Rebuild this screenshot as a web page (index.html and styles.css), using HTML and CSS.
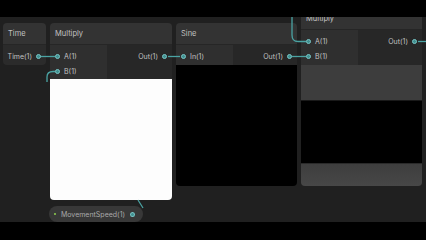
FILE: index.html
```html
<!DOCTYPE html>
<html lang="en">
<head>
    <meta charset="UTF-8">
    <title>Shader Graph</title>
    <link rel="stylesheet" href="styles.css">
</head>
<body>

<div class="canvas">

    <div class="node time">
        <div class="title">Time</div>
        <div class="body">
            <div class="outputs">
                <div class="row out"><span>Time(1)</span><i class="port"></i></div>
            </div>
        </div>
    </div>

    <div class="node multiply">
        <div class="title">Multiply</div>
        <div class="body">
            <div class="inputs">
                <div class="row"><i class="port"></i><span>A(1)</span></div>
                <div class="row"><i class="port"></i><span>B(1)</span></div>
            </div>
            <div class="outputs">
                <div class="row out"><span>Out(1)</span><i class="port"></i></div>
            </div>
        </div>
        <div class="preview white"></div>
    </div>

    <div class="node sine">
        <div class="title">Sine</div>
        <div class="body">
            <div class="inputs">
                <div class="row"><i class="port"></i><span>In(1)</span></div>
            </div>
            <div class="outputs">
                <div class="row out"><span>Out(1)</span><i class="port"></i></div>
            </div>
        </div>
        <div class="preview black"></div>
    </div>

    <div class="node multiply2">
        <div class="title">Multiply</div>
        <div class="body">
            <div class="inputs">
                <div class="row"><i class="port"></i><span>A(1)</span></div>
                <div class="row"><i class="port"></i><span>B(1)</span></div>
            </div>
            <div class="outputs">
                <div class="row out"><span>Out(1)</span><i class="port"></i></div>
            </div>
        </div>
        <div class="extra"></div>
        <div class="preview black short"></div>
        <div class="footer"></div>
    </div>

    <div class="property">
        <i class="dot"></i>
        <span>MovementSpeed(1)</span>
        <i class="port"></i>
    </div>

    <!-- conexiones -->
    <svg class="wires" width="426" height="240">
        <path d="M41 56.5 H55" />
        <path d="M168 56.5 H180" />
        <path d="M292 56.5 H306" />
        <path d="M418 41.5 H426" />
        <path d="M292 0 V35 Q292 41.5 298 41.5 H306" />
        <path d="M55 71.5 H53 Q47 71.5 47 77 V82" />
        <path d="M138 200 L143 208" />
    </svg>

    <div class="bar top"></div>
    <div class="bar bottom"></div>
</div>

</body>
</html>
```

FILE: styles.css
```css
body {
    margin: 0;
    background: #000;
    font-family: Inter, "Noto Sans", sans-serif;
    font-size: 7px;
    color: #c2c2c2;
}
.canvas {
    position: relative;
    width: 426px;
    height: 240px;
    overflow: hidden;
    background: #202020;
}
.bar {
    position: absolute;
    left: 0;
    width: 426px;
    background: #000;
}
.bar.top {
    top: 0;
    height: 17px;
}
.bar.bottom {
    top: 222px;
    height: 18px;
}
.node {
    position: absolute;
    display: flex;
    flex-direction: column;
    border-radius: 4px;
    overflow: hidden;
}
.node.time { left: 3px; top: 23px; width: 43px; }
.node.multiply { left: 50px; top: 23px; width: 122px; }
.node.sine { left: 176px; top: 23px; width: 121px; }
.node.multiply2 { left: 301px; top: 8px; width: 121px; }

.title {
    height: 22px;
    line-height: 22px;
    padding-left: 5px;
    background: #333333;
    font-size: 7.5px;
    border-bottom: 1px solid #262626;
    box-sizing: border-box;
}
.body {
    display: flex;
}
.inputs {
    width: 57px;
    padding: 4px 0 1px;
    background: #2f2f2f;
}
.outputs {
    flex: 1;
    padding: 4px 0 1px;
    background: #272727;
}
.multiply .inputs,
.multiply .outputs {
    padding-bottom: 0;
}
.time .outputs {
    background: #2b2b2b;
}
.row {
    height: 15px;
    display: flex;
    align-items: center;
    gap: 4px;
    padding-left: 5px;
}
.row.out {
    justify-content: flex-end;
    padding-left: 0;
    padding-right: 5px;
}
.port {
    display: block;
    width: 3px;
    height: 3px;
    border-radius: 50%;
    background: #3f8f8f;
    border: 1px solid #79c6c6;
}
.preview {
    height: 121px;
}
.preview.white {
    background: #fdfdfd;
}
.preview.black {
    background: #000;
}
.preview.short {
    height: 62px;
    border-top: 1px solid #191919;
    border-bottom: 1px solid #2a2a2a;
    border-radius: 0;
}
.extra {
    height: 35px;
    background: #3d3d3d;
}
.footer {
    height: 22px;
    background: linear-gradient(#3e3e3e, #474747);
}
.wires {
    position: absolute;
    left: 0;
    top: 0;
    pointer-events: none;
}
.wires path {
    fill: none;
    stroke: #4aa3a3;
    stroke-width: 1.3;
}
.property {
    position: absolute;
    left: 49px;
    top: 206px;
    width: 94px;
    height: 16px;
    box-sizing: border-box;
    display: flex;
    align-items: center;
    gap: 5px;
    padding: 0 8px 0 5px;
    background: #383838;
    border-radius: 8px;
    color: #a9a9a9;
}
.property .dot {
    width: 2px;
    height: 2px;
    background: #8fd14f;
    border-radius: 50%;
}
.property span {
    flex: 1;
}
```
